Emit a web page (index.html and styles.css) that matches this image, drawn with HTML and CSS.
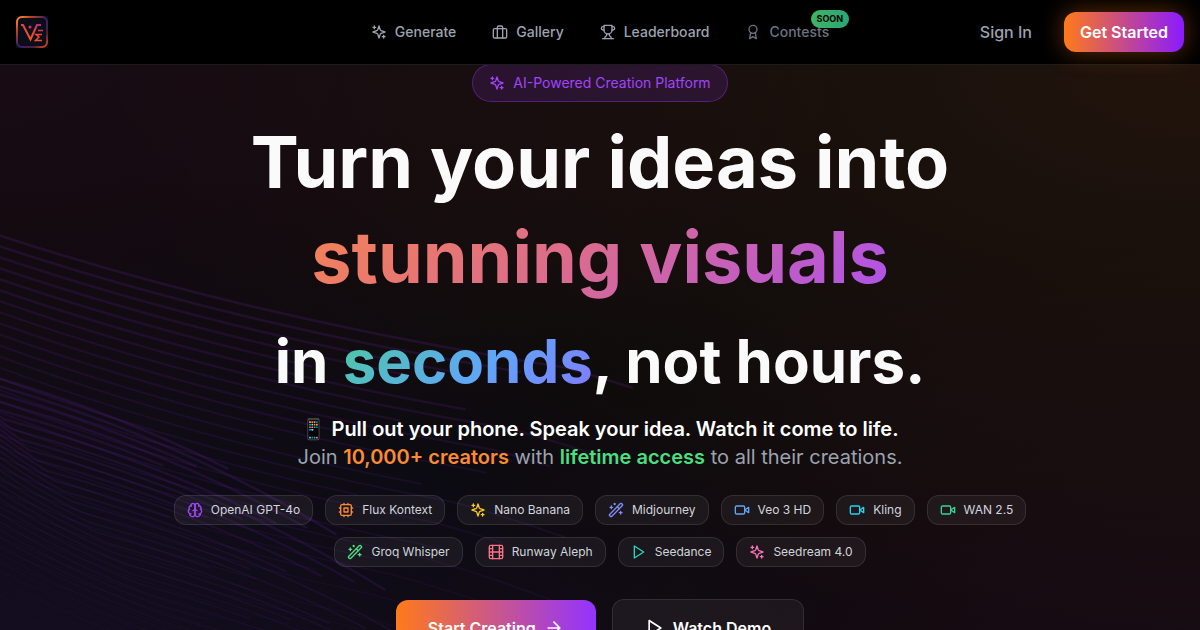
FILE: index.html
```html
<!DOCTYPE html>
<html lang="en">
<head>
  <meta charset="utf-8">
  <meta name="viewport" content="width=device-width, initial-scale=1">
  <title>Turn your ideas into stunning visuals</title>
  <link rel="stylesheet" href="styles.css">
</head>
<body>
  <svg class="sprite" aria-hidden="true">
    <symbol id="i-sparkles" viewBox="0 0 24 24">
      <path d="m12 3-1.912 5.813a2 2 0 0 1-1.275 1.275L3 12l5.813 1.912a2 2 0 0 1 1.275 1.275L12 21l1.912-5.813a2 2 0 0 1 1.275-1.275L21 12l-5.813-1.912a2 2 0 0 1-1.275-1.275L12 3Z"/>
      <path d="M5 3v4M19 17v4M3 5h4M17 19h4"/>
    </symbol>
    <symbol id="i-briefcase" viewBox="0 0 24 24">
      <rect x="2" y="7" width="20" height="14" rx="2"/>
      <path d="M16 21V5a2 2 0 0 0-2-2h-4a2 2 0 0 0-2 2v16"/>
    </symbol>
    <symbol id="i-trophy" viewBox="0 0 24 24">
      <path d="M6 9H4.5a2.5 2.5 0 0 1 0-5H6M18 9h1.5a2.5 2.5 0 0 0 0-5H18M4 22h16"/>
      <path d="M10 14.66V17c0 .55-.47.98-.97 1.21C7.85 18.75 7 20.24 7 22M14 14.66V17c0 .55.47.98.97 1.21C16.15 18.75 17 20.24 17 22"/>
      <path d="M18 2H6v7a6 6 0 0 0 12 0V2Z"/>
    </symbol>
    <symbol id="i-award" viewBox="0 0 24 24">
      <circle cx="12" cy="8" r="6"/>
      <path d="M15.477 12.89 17 22l-5-3-5 3 1.523-9.11"/>
    </symbol>
    <symbol id="i-brain" viewBox="0 0 24 24">
      <path d="M12 5a3 3 0 1 0-5.997.125 4 4 0 0 0-2.526 5.77 4 4 0 0 0 .556 6.588A4 4 0 1 0 12 18Z"/>
      <path d="M12 5a3 3 0 1 1 5.997.125 4 4 0 0 1 2.526 5.77 4 4 0 0 1-.556 6.588A4 4 0 1 1 12 18Z"/>
      <path d="M15 13a4.500 4.500 0 0 1-3-4 4.500 4.500 0 0 1-3 4M17.599 6.500a3 3 0 0 0 .399-1.375M6.003 5.125A3 3 0 0 0 6.401 6.500M3.477 10.896a4 4 0 0 1 .585-.396M19.938 10.500a4 4 0 0 1 .585.396M6 18a4 4 0 0 1-1.967-.516M19.967 17.484A4 4 0 0 1 18 18"/>
    </symbol>
    <symbol id="i-cpu" viewBox="0 0 24 24">
      <rect x="4" y="4" width="16" height="16" rx="2"/>
      <rect x="9" y="9" width="6" height="6"/>
      <path d="M15 2v2M15 20v2M2 15h2M2 9h2M20 15h2M20 9h2M9 2v2M9 20v2"/>
    </symbol>
    <symbol id="i-wand" viewBox="0 0 24 24">
      <path d="m21.640 3.640-1.280-1.280a1.210 1.210 0 0 0-1.720 0L2.360 18.640a1.210 1.210 0 0 0 0 1.720l1.280 1.280a1.200 1.200 0 0 0 1.720 0L21.640 5.360a1.200 1.200 0 0 0 0-1.720Z"/>
      <path d="m14 7 3 3M5 6v4M19 14v4M10 2v2M7 8H3M21 16h-4M11 3H9"/>
    </symbol>
    <symbol id="i-video" viewBox="0 0 24 24">
      <path d="m22 8-6 4 6 4V8Z"/>
      <rect x="2" y="6" width="14" height="12" rx="2"/>
    </symbol>
    <symbol id="i-film" viewBox="0 0 24 24">
      <rect x="2" y="2" width="20" height="20" rx="2"/>
      <path d="M7 2v20M17 2v20M2 12h20M2 7h5M2 17h5M17 17h5M17 7h5"/>
    </symbol>
    <symbol id="i-play" viewBox="0 0 24 24">
      <path d="m5 3 14 9-14 9V3z"/>
    </symbol>
    <symbol id="i-arrow" viewBox="0 0 24 24">
      <path d="M5 12h14M12 5l7 7-7 7"/>
    </symbol>
  </svg>

  <header class="header">
    <a class="logo" href="#" aria-label="Home">
      <svg viewBox="0 0 32 32" width="32" height="32" fill="none">
        <defs>
          <linearGradient id="logo-frame" x1="0" y1="0" x2="1" y2="1">
            <stop offset="0" stop-color="#ff9a2e"/>
            <stop offset=".22" stop-color="#c0441f"/>
            <stop offset=".5" stop-color="#3a2266"/>
            <stop offset=".78" stop-color="#4a1f40"/>
            <stop offset="1" stop-color="#f04a10"/>
          </linearGradient>
          <linearGradient id="logo-mark" x1="24" y1="7" x2="15" y2="25" gradientUnits="userSpaceOnUse">
            <stop offset="0" stop-color="#a32c92"/>
            <stop offset=".5" stop-color="#e8443a"/>
            <stop offset="1" stop-color="#f4561c"/>
          </linearGradient>
        </defs>
        <rect width="32" height="32" fill="#0c0d1a"/>
        <rect x="1" y="1" width="30" height="30" rx="5" stroke="url(#logo-frame)" stroke-width="2"/>
        <g stroke="url(#logo-mark)" stroke-width="2">
          <path d="M5 9h2l7.500 14.500L21 9h4"/>
          <path d="M22 14.500h5M26 18.500h-6l3 2.500-3.500 3.500H26" stroke-width="1.500"/>
        </g>
        <circle cx="14" cy="11" r="1.500" fill="#d03a4c"/>
      </svg>
    </a>
    <nav class="nav">
      <a class="nav-link" href="#"><svg class="icon"><use href="#i-sparkles"/></svg>Generate</a>
      <a class="nav-link" href="#"><svg class="icon"><use href="#i-briefcase"/></svg>Gallery</a>
      <a class="nav-link" href="#"><svg class="icon"><use href="#i-trophy"/></svg>Leaderboard</a>
      <a class="nav-link nav-muted" href="#"><svg class="icon"><use href="#i-award"/></svg>Contests<span class="soon">SOON</span></a>
    </nav>
    <div class="account">
      <a class="sign-in" href="#">Sign In</a>
      <button class="get-started" type="button">Get Started</button>
    </div>
  </header>

  <main class="hero">
    <svg class="waves" id="waves" viewBox="0 0 696 316" fill="none" aria-hidden="true"></svg>

    <div class="hero-content">
      <p class="tagline"><svg class="icon"><use href="#i-sparkles"/></svg>AI-Powered Creation Platform</p>

      <h1 class="title">
        <span class="title-line">Turn your ideas into</span>
        <span class="title-line"><span class="grad-warm">stunning visuals</span></span>
        <span class="title-line title-small">in <span class="grad-cool">seconds</span>, not hours.</span>
      </h1>

      <p class="lead">
        <strong class="lead-white">📱 Pull out your phone. Speak your idea. Watch it come to life.</strong><br>
        Join <strong class="lead-orange">10,000+ creators</strong> with <strong class="lead-green">lifetime access</strong> to all their creations.
      </p>

      <ul class="models">
        <li class="model"><svg class="icon purple"><use href="#i-brain"/></svg>OpenAI GPT-4o</li>
        <li class="model"><svg class="icon orange"><use href="#i-cpu"/></svg>Flux Kontext</li>
        <li class="model"><svg class="icon yellow"><use href="#i-sparkles"/></svg>Nano Banana</li>
        <li class="model"><svg class="icon indigo"><use href="#i-wand"/></svg>Midjourney</li>
        <li class="model"><svg class="icon blue"><use href="#i-video"/></svg>Veo 3 HD</li>
        <li class="model"><svg class="icon cyan"><use href="#i-video"/></svg>Kling</li>
        <li class="model"><svg class="icon emerald"><use href="#i-video"/></svg>WAN 2.5</li>
        <li class="model"><svg class="icon green"><use href="#i-wand"/></svg>Groq Whisper</li>
        <li class="model"><svg class="icon rose"><use href="#i-film"/></svg>Runway Aleph</li>
        <li class="model"><svg class="icon teal"><use href="#i-play"/></svg>Seedance</li>
        <li class="model"><svg class="icon pink"><use href="#i-sparkles"/></svg>Seedream 4.0</li>
      </ul>

      <div class="actions">
        <button class="btn btn-primary" type="button">Start Creating<svg class="icon"><use href="#i-arrow"/></svg></button>
        <button class="btn btn-ghost" type="button"><svg class="icon"><use href="#i-play"/></svg>Watch Demo</button>
      </div>
    </div>
  </main>

  <script src="waves.js"></script>
</body>
</html>
```
FILE: styles.css
```css
* {
  box-sizing: border-box;
}

body {
  margin: 0;
  background: #09090b;
  color: #fafafa;
  font-family: Inter, "Liberation Sans", sans-serif;
  font-size: 16px;
  line-height: 24px;
}

a {
  color: inherit;
  text-decoration: none;
}

button {
  font: inherit;
  cursor: pointer;
}

.sprite {
  display: none;
}

.icon {
  flex: none;
  width: 16px;
  height: 16px;
  fill: none;
  stroke: currentColor;
  stroke-width: 2;
  stroke-linecap: round;
  stroke-linejoin: round;
}

/* header */
.header {
  position: relative;
  z-index: 2;
  display: grid;
  grid-template-columns: 1fr auto 1fr;
  align-items: center;
  height: 65px;
  margin-bottom: -1px;
  padding: 0 16px;
  background: #000;
  border-bottom: 1px solid #1c1c1c;
}

.logo svg {
  display: block;
}

.nav {
  display: flex;
  gap: 12px;
}

.nav-link {
  position: relative;
  display: flex;
  align-items: center;
  gap: 8px;
  padding: 8px 12px;
  color: #9ca3af;
  font-size: 14px;
  font-weight: 500;
  line-height: 20px;
}

.nav-muted {
  color: #6b7280;
}

.soon {
  position: absolute;
  top: -4px;
  right: -8px;
  padding: 0 6px;
  border-radius: 9px;
  background: linear-gradient(90deg, #3fb463, #2aa678);
  color: #000;
  font-size: 9px;
  font-weight: 700;
  line-height: 18px;
}

.account {
  display: flex;
  justify-content: flex-end;
  align-items: center;
  gap: 32px;
}

.sign-in {
  color: #9ca3af;
  font-weight: 500;
}

.get-started {
  height: 40px;
  padding: 0 16px;
  border: 0;
  border-radius: 12px;
  background: linear-gradient(90deg, #ff7a1a, #8b1aff);
  box-shadow: 0 0 24px rgba(249, 115, 22, .4);
  color: #fff;
  font-weight: 600;
}

/* hero */
.hero {
  position: relative;
  overflow: hidden;
  background:
    radial-gradient(ellipse at 100% 0, rgba(249, 115, 22, .1), rgba(249, 115, 22, .04) 40%, transparent 65%),
    radial-gradient(ellipse at 0 0, rgba(219, 39, 119, .08), transparent 50%),
    radial-gradient(ellipse at 0 100%, rgba(124, 58, 237, .1), transparent 50%),
    radial-gradient(ellipse at 100% 100%, rgba(219, 39, 119, .08), transparent 50%),
    #09090b;
}

.waves {
  position: absolute;
  top: 74px;
  left: 0;
  width: 100%;
  overflow: visible;
}

.waves path {
  stroke: #9333ea;
}

.hero-content {
  position: relative;
  display: flex;
  flex-direction: column;
  align-items: center;
  padding: 0 16px 32px;
  text-align: center;
}

.tagline {
  display: flex;
  align-items: center;
  gap: 8px;
  margin: 0 0 20px;
  padding: 8px 16px;
  border: 1px solid rgba(147, 51, 234, .4);
  border-radius: 19px;
  background: rgba(147, 51, 234, .15);
  color: #a046f8;
  font-size: 14px;
  line-height: 20px;
}

.title {
  margin: 0;
  font-size: 72px;
  font-weight: 700;
  line-height: 79px;
}

.title-line {
  display: block;
  margin-bottom: 16px;
}

.title-small {
  margin: 35px 0 24px;
  font-size: 60px;
  line-height: 60px;
}

.grad-warm,
.grad-cool {
  background-clip: text;
  -webkit-background-clip: text;
  color: transparent;
}

.grad-warm {
  background-image: linear-gradient(135deg, #f58354, #dc6c8c 45%, #ae52ec);
}

.grad-cool {
  background-image: linear-gradient(135deg, #4ccb9f, #60a5fa 58%, #8179ff);
}

.lead {
  margin: 0 0 24px;
  color: #9ca3af;
  font-size: 20px;
  line-height: 28px;
}

.lead strong {
  font-weight: 600;
}

.lead-white {
  color: #fff;
}

.lead .lead-orange {
  color: #fb8a35;
}

.lead .lead-green {
  color: #4ade80;
}

.models {
  display: flex;
  flex-wrap: wrap;
  justify-content: center;
  gap: 12px;
  max-width: 896px;
  margin: 0 0 32px;
  padding: 0;
  list-style: none;
}

.model {
  display: flex;
  align-items: center;
  gap: 8px;
  padding: 6px 12px;
  border: 1px solid rgba(255, 255, 255, .1);
  border-radius: 12px;
  background: rgba(255, 255, 255, .05);
  color: #d1d5db;
  font-size: 12px;
  line-height: 16px;
}

.purple { color: #a046f8; }
.orange { color: #fb8a35; }
.yellow { color: #facc15; }
.indigo { color: #818cf8; }
.blue { color: #60a5fa; }
.cyan { color: #22d3ee; }
.emerald { color: #34d399; }
.green { color: #4ade80; }
.rose { color: #fb7185; }
.teal { color: #2dd4bf; }
.pink { color: #f472b6; }

.actions {
  display: flex;
  align-items: center;
  gap: 16px;
}

.btn {
  display: flex;
  align-items: center;
  gap: 8px;
  padding: 16px 32px;
  border: 0;
  border-radius: 12px;
  color: #fff;
  font-weight: 600;
}

.btn .icon {
  width: 20px;
  height: 20px;
}

.btn-primary {
  background: linear-gradient(90deg, #ff7a1a, #9333ff);
}

.btn-ghost {
  border: 1px solid rgba(255, 255, 255, .1);
  background: rgba(255, 255, 255, .05);
}
```
FILE: waves.js
```javascript
// two mirrored sets of flowing lines, each drawn up to its own length
var waves = document.getElementById("waves");
var NS = "http://www.w3.org/2000/svg";
var topLengths = { 35: 0.6, 34: 0.565, 33: 0.545, 32: 0.53 };

function wavePath(i, side) {
  var dx = i * 5 * side;
  var dy = i * 6;
  var start = (dx - 380) + " " + (-189 - dy);
  var middle = (152 - dx) + " " + (343 - dy);
  var end = (684 - dx) + " " + (875 - dy);
  return "M" + start +
    "C" + start + " " + (dx - 312) + " " + (216 - dy) + " " + middle +
    "C" + (616 - dx) + " " + (470 - dy) + " " + end + " " + end;
}

[1, -1].forEach(function (side) {
  for (var i = 0; i < 36; i++) {
    var path = document.createElementNS(NS, "path");
    var shown = 0.49 + (i * 7 % 12) / 100;
    if (side == -1 && topLengths[i]) shown = topLengths[i];
    path.setAttribute("d", wavePath(i, side));
    path.setAttribute("pathLength", 1);
    path.setAttribute("stroke-dasharray", shown + " 2");
    path.setAttribute("stroke-width", 0.5 + i * 0.03);
    path.setAttribute("stroke-opacity", 0.02 + i * 0.0032);
    waves.appendChild(path);
  }
});
```
